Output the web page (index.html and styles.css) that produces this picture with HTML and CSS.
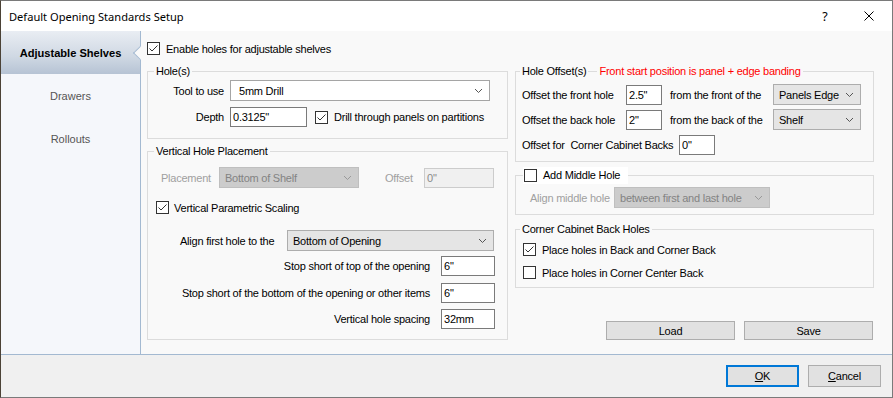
FILE: index.html
```html
<!DOCTYPE html>
<html lang="en">
<head>
<meta charset="utf-8">
<title>Default Opening Standards Setup</title>
<link rel="stylesheet" href="styles.css">
</head>
<body>
<div class="window">
  <header class="titlebar">
    <span class="title">Default Opening Standards Setup</span>
    <span class="cap-btn help">?</span>
    <span class="cap-btn close"><svg width="10" height="10" viewBox="0 0 10 10"><path d="M0.5 0.5 L9.5 9.5 M9.5 0.5 L0.5 9.5" stroke="#000" stroke-width="1" fill="none"/></svg></span>
  </header>

  <div class="main">
    <nav class="sidebar">
      <div class="nav-item active">Adjustable Shelves</div>
      <div class="nav-item">Drawers</div>
      <div class="nav-item">Rollouts</div>
    </nav>

    <div class="content">
      <div class="col col-left">
        <label class="check enable"><span class="cb"><svg width="11" height="11" viewBox="0 0 11 11"><path d="M1.5 5.5 L4 8 L9.5 2.5" stroke="#333" fill="none"/></svg></span><span>Enable holes for adjustable shelves</span></label>

        <fieldset class="group g-holes">
          <legend>Hole(s)</legend>
          <div class="row r-tool">
            <span class="lbl lbl-r w-hole">Tool to use</span>
            <div class="combo edit w-tool"><span>5mm Drill</span><svg class="chev" width="7" height="4" viewBox="0 0 7 4"><path d="M0 0 L3.5 3.5 L7 0" stroke="#555" fill="none"/></svg></div>
          </div>
          <div class="row r-depth">
            <span class="lbl lbl-r w-hole">Depth</span>
            <input class="tbox w-depth" type="text" value="0.3125&quot;" readonly>
            <label class="check drill"><span class="cb"><svg width="11" height="11" viewBox="0 0 11 11"><path d="M1.5 5.5 L4 8 L9.5 2.5" stroke="#333" fill="none"/></svg></span><span>Drill through panels on partitions</span></label>
          </div>
        </fieldset>

        <fieldset class="group g-vert">
          <legend>Vertical Hole Placement</legend>
          <div class="row r-place">
            <span class="lbl dis w-place">Placement</span>
            <div class="combo disabled w-placesel"><span>Bottom of Shelf</span><svg class="chev" width="7" height="4" viewBox="0 0 7 4"><path d="M0 0 L3.5 3.5 L7 0" stroke="#999" fill="none"/></svg></div>
            <span class="lbl dis w-offset">Offset</span>
            <input class="tbox tdis w-offin" type="text" value="0&quot;" readonly>
          </div>
          <label class="check vps"><span class="cb"><svg width="11" height="11" viewBox="0 0 11 11"><path d="M1.5 5.5 L4 8 L9.5 2.5" stroke="#333" fill="none"/></svg></span><span>Vertical Parametric Scaling</span></label>
          <div class="row r-align">
            <span class="lbl w-align">Align first hole to the</span>
            <div class="combo list w-alignsel"><span>Bottom of Opening</span><svg class="chev" width="7" height="4" viewBox="0 0 7 4"><path d="M0 0 L3.5 3.5 L7 0" stroke="#555" fill="none"/></svg></div>
          </div>
          <div class="row r-stop r-stop1">
            <span class="lbl">Stop short of top of the opening</span>
            <input class="tbox w-stop" type="text" value="6&quot;" readonly>
          </div>
          <div class="row r-stop r-stop2">
            <span class="lbl">Stop short of the bottom of the opening or other items</span>
            <input class="tbox w-stop" type="text" value="6&quot;" readonly>
          </div>
          <div class="row r-stop r-stop3">
            <span class="lbl">Vertical hole spacing</span>
            <input class="tbox w-stop" type="text" value="32mm" readonly>
          </div>
        </fieldset>
      </div>

      <div class="col col-right">
        <fieldset class="group g-offset">
          <legend><span>Hole Offset(s)</span><span class="leg-line"></span><span class="note">Front start position is panel + edge banding</span></legend>
          <div class="row r-off1">
            <span class="lbl w-offl">Offset the front hole</span>
            <input class="tbox w-offv" type="text" value="2.5&quot;" readonly>
            <span class="lbl w-from">from the front of the</span>
            <div class="combo list w-fromsel"><span>Panels Edge</span><svg class="chev" width="7" height="4" viewBox="0 0 7 4"><path d="M0 0 L3.5 3.5 L7 0" stroke="#555" fill="none"/></svg></div>
          </div>
          <div class="row r-off2">
            <span class="lbl w-offl">Offset the back hole</span>
            <input class="tbox w-offv" type="text" value="2&quot;" readonly>
            <span class="lbl w-from">from the back of the</span>
            <div class="combo list w-fromsel"><span>Shelf</span><svg class="chev" width="7" height="4" viewBox="0 0 7 4"><path d="M0 0 L3.5 3.5 L7 0" stroke="#555" fill="none"/></svg></div>
          </div>
          <div class="row r-off3">
            <span class="lbl w-corner">Offset for&nbsp; Corner Cabinet Backs</span>
            <input class="tbox w-offv" type="text" value="0&quot;" readonly>
          </div>
        </fieldset>

        <fieldset class="group g-middle">
          <legend><label class="check"><span class="cb"></span><span>Add Middle Hole</span></label></legend>
          <div class="row r-mid">
            <span class="lbl dis w-mid">Align middle hole</span>
            <div class="combo disabled w-midsel"><span>between first and last hole</span><svg class="chev" width="7" height="4" viewBox="0 0 7 4"><path d="M0 0 L3.5 3.5 L7 0" stroke="#999" fill="none"/></svg></div>
          </div>
        </fieldset>

        <fieldset class="group g-corner">
          <legend>Corner Cabinet Back Holes</legend>
          <label class="check c1"><span class="cb"><svg width="11" height="11" viewBox="0 0 11 11"><path d="M1.5 5.5 L4 8 L9.5 2.5" stroke="#333" fill="none"/></svg></span><span>Place holes in Back and Corner Back</span></label>
          <label class="check c2"><span class="cb"></span><span>Place holes in Corner Center Back</span></label>
        </fieldset>

        <div class="io-buttons">
          <button class="btn w-io" type="button">Load</button>
          <button class="btn w-io" type="button">Save</button>
        </div>
      </div>
    </div>
  </div>

  <footer class="footer">
    <button class="btn default w-dlg" type="button"><u>O</u>K</button>
    <button class="btn w-dlg" type="button"><u>C</u>ancel</button>
  </footer>
</div>
</body>
</html>
```

FILE: styles.css
```css
* { box-sizing: border-box; }
html, body { margin: 0; padding: 0; }
body {
  width: 893px;
  height: 398px;
  overflow: hidden;
  background: #fff;
  font-family: "Liberation Sans", Arial, sans-serif;
  font-size: 11px;
  letter-spacing: -0.23px;
  color: #000;
}
.window {
  width: 893px;
  height: 398px;
  border: 1px solid #7a7a7a;
  border-left-color: #4b4236;
  display: flex;
  flex-direction: column;
  background: #fff;
}

/* title bar */
.titlebar {
  flex: none;
  height: 30px;
  display: flex;
  align-items: center;
  padding-left: 8px;
  background: #fff;
  font-family: "Noto Sans", "Liberation Sans", sans-serif;
  font-size: 11.1px;
  letter-spacing: 0;
}
.title { flex: 1; }
.cap-btn {
  width: 46px;
  height: 30px;
  display: flex;
  align-items: center;
  justify-content: center;
}
.help { font-size: 12.5px; padding-left: 4px; }

/* main area */
.main {
  flex: none;
  height: 324px;
  display: flex;
  border-bottom: 1px solid #a3b9d1;
}
.sidebar {
  flex: none;
  width: 140px;
  background: #f5f7fb;
  border-right: 1px solid #a3b9d1;
  display: flex;
  flex-direction: column;
}
.nav-item {
  height: 43px;
  display: flex;
  align-items: center;
  justify-content: center;
  font-size: 11px;
  letter-spacing: 0;
  color: #555;
}
.nav-item.active {
  position: relative;
  color: #000;
  font-weight: bold;
  font-size: 11.1px;
  background: linear-gradient(#e9edf3, #cfd8e3 60%, #b6c3d4);
}
.nav-item.active::after {
  content: "";
  position: absolute;
  right: -5px;
  top: 17px;
  width: 9px;
  height: 9px;
  background: #f9f9f9;
  border-left: 1px solid #a3b9d1;
  border-bottom: 1px solid #a3b9d1;
  transform: rotate(45deg);
}

.content {
  flex: 1;
  background: #f9f9f9;
  display: flex;
  gap: 7px;
  padding: 11px 0 0 6px;
}
.col { display: flex; flex-direction: column; }
.col-left { width: 361px; }
.col-right { width: 359px; }

/* fieldsets */
.group {
  margin: 0;
  padding: 0;
  min-width: 0;
  border: 1px solid #dcdcdc;
}
.group legend {
  padding: 0 2px;
  margin-left: 6px;
  line-height: 13px;
  display: flex;
  align-items: center;
}
.g-offset legend, .g-corner legend { margin-left: 4px; }
.leg-line {
  display: inline-block;
  width: 9px;
  height: 13px;
  margin: 0 2px;
  background: linear-gradient(#dcdcdc, #dcdcdc) no-repeat 0 6px / 100% 1px;
}
.note { color: #ff0000; }

.row { display: flex; align-items: center; }
.lbl { white-space: nowrap; flex: none; }
.lbl-r { text-align: right; }
.dis { color: #a0a0a0; }

/* checkboxes */
.check { display: flex; align-items: center; white-space: nowrap; }
.cb {
  flex: none;
  width: 13px;
  height: 13px;
  border: 1px solid #333;
  background: #fff;
  display: flex;
  align-items: center;
  justify-content: center;
  margin-right: 6px;
}

/* controls */
.combo {
  flex: none;
  height: 21px;
  display: flex;
  align-items: center;
  justify-content: space-between;
  padding: 0 7px 0 5px;
  border: 1px solid #adadad;
  white-space: nowrap;
}
.combo.edit { background: #fff; border-color: #a5a5a5; padding-left: 8px; }
.combo.list { background: #e5e5e5; border-color: #adadad; }
.combo.disabled { background: #cccccc; border-color: #bfbfbf; color: #838383; }
.chev { flex: none; }

.tbox {
  flex: none;
  height: 20px;
  margin: 0;
  padding: 0 2px;
  border: 1px solid #7a7a7a;
  background: #fff;
  font: inherit;
  letter-spacing: inherit;
  color: #000;
  outline: none;
}
.tbox.tdis { background: #f0f0f0; border-color: #cccccc; color: #8a8a8a; }

.btn {
  flex: none;
  margin: 0;
  padding: 0;
  font: inherit;
  letter-spacing: inherit;
  color: #000;
  background: #e1e1e1;
  border: 1px solid #adadad;
}

/* left column */
.enable { height: 13px; }
.enable .cb { margin-right: 6px; }

.g-holes { margin-top: 10px; padding-bottom: 11px; }
.w-hole { width: 76px; margin-right: 6px; }
.r-tool { margin-top: 2px; }
.w-tool { width: 260px; }
.r-depth { margin-top: 6px; }
.w-depth { width: 77px; }
.drill { margin-left: 8px; }

.g-vert { margin-top: 6px; padding-bottom: 10px; }
.r-place { margin-top: 9px; padding-left: 13px; }
.w-place { width: 58px; }
.w-placesel { width: 140px; }
.w-offset { margin-left: 26px; width: 39px; }
.w-offin { width: 70px; }
.vps { margin-top: 13px; margin-left: 8px; height: 13px; }
.vps .cb { margin-right: 5px; }
.r-align { margin-top: 16px; padding-left: 32px; }
.w-align { width: 107px; }
.w-alignsel { width: 207px; }
.r-stop { justify-content: flex-end; padding-right: 12px; }
.r-stop .lbl { margin-right: 11px; }
.r-stop1 { margin-top: 5px; }
.r-stop2 { margin-top: 7px; }
.r-stop3 { margin-top: 6px; }
.w-stop { width: 54px; }

/* right column */
.g-offset { margin-top: 23px; padding-bottom: 6px; }
.g-offset .row { padding-left: 6px; }
.r-off1 { margin-top: 6px; }
.r-off2 { margin-top: 4px; }
.r-off3 { margin-top: 5px; }
.w-offl { width: 104px; }
.w-offv { width: 36px; }
.w-from { width: 103px; margin-left: 8px; }
.w-fromsel { width: 88px; }
.w-corner { width: 157px; }

.g-middle { margin-top: 5px; padding-bottom: 6px; }
.g-middle legend {
  margin-left: 7px;
  padding: 0 8px 0 1px;
  background: #fff;
  line-height: 17px;
}
.r-mid { margin-top: 3px; padding-left: 14px; }
.w-mid { width: 84px; }
.w-midsel { width: 156px; }

.g-corner { margin-top: 8px; padding-bottom: 8px; }
.g-corner .check { height: 13px; margin-left: 7px; }
.c1 { margin-top: 7px; }
.c2 { margin-top: 10px; }

.io-buttons {
  margin-top: 33px;
  display: flex;
  justify-content: flex-end;
  gap: 9px;
  padding-right: 1px;
}
.w-io { width: 129px; height: 19px; }

/* footer */
.footer {
  flex: 1;
  background: #f0f0f0;
  display: flex;
  justify-content: flex-end;
  align-items: flex-start;
  gap: 9px;
  padding: 10px 11px 0 0;
}
.w-dlg { width: 73px; height: 22px; }
.btn.default { border: 2px solid #0078d7; }
```
